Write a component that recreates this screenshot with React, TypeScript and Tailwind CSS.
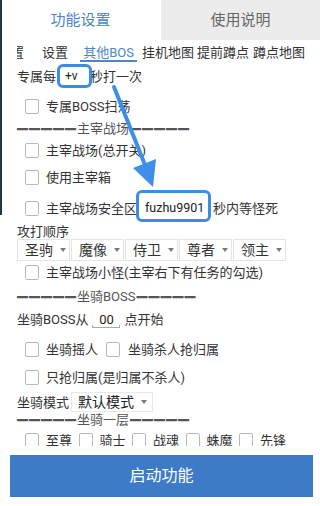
import React from "react"

const Box = () => (
  <span className="inline-block w-[14px] h-[15px] border border-[#b8b8b8] rounded-[2px] bg-white shrink-0" />
)

const Check = ({ label, gap = "ml-[7px]" }: { label: string; gap?: string }) => (
  <div className="flex items-center">
    <Box />
    <span className={gap}>{label}</span>
  </div>
)

const Tri = () => (
  <span className="inline-block w-0 h-0 border-l-[3px] border-r-[3px] border-t-[4px] border-l-transparent border-r-transparent border-t-[#7a7a7a]" />
)

// thick grey dash run, like the original divider text
const Dashes = () => (
  <span className="font-['Liberation_Sans',sans-serif] text-[11px] font-bold text-[#555] tracking-[1px] [text-shadow:0_1px_0_#555]">
    —————
  </span>
)

const Divider = ({ label, h }: { label: string; h: string }) => (
  <div className={`flex items-center pl-[17px] text-[#555] ${h}`}>
    <Dashes />
    <span className="mr-[1px]">{label}</span>
    <Dashes />
  </div>
)

const Drop = ({ label }: { label: string }) => (
  <div className="flex items-center justify-between w-[53px] h-[22px] border border-[#e4e4e4] pl-[7px] pr-[3px] text-[14px] text-[#333]">
    <span>{label}</span>
    <Tri />
  </div>
)

const ORDER = ["圣驹", "魔像", "侍卫", "尊者", "领主"]
const FLOOR = ["至尊", "骑士", "战魂", "蛛魔", "先锋"]

export default function App() {
  return (
    <div className="relative w-[320px] h-[506px] overflow-hidden bg-white text-[13px] text-[#333] font-[Roboto,'Noto_Sans_CJK_SC',sans-serif] leading-none">
      {/* header tabs */}
      <div className="flex h-[40px]">
        <div className="w-[161px] flex items-center justify-center bg-white text-[15px] text-[#4d86c8]">
          功能设置
        </div>
        <div className="flex-1 flex items-center justify-center bg-[#ececec] text-[15px] text-[#666]">
          使用说明
        </div>
      </div>

      {/* scroll area */}
      <div className="h-[406px] overflow-hidden">
        {/* sub tabs */}
        <div className="flex items-center h-[24px] pl-[17px] text-[13px] text-[#333]">
          <div className="w-[7px] overflow-hidden">
            <span className="block -ml-[6px]">置</span>
          </div>
          <span className="ml-[18px]">设置</span>
          <div className="relative ml-[12px] w-[57px] h-[24px] flex items-center justify-center text-[#4d86c8]">
            其他BOS
            <span className="absolute left-0 right-0 bottom-[2px] h-[2px] bg-[#4d86c8]" />
          </div>
          <span className="ml-[5px]">挂机地图</span>
          <span className="ml-[3px]">提前蹲点</span>
          <span className="ml-[4px]">蹲点地图</span>
        </div>

        {/* 专属每 */}
        <div className="flex items-center h-[24px] pl-[17px]">
          <span>专属每</span>
          <div className="relative w-[34px] h-[24px] flex items-center pl-[9px] text-[12px] text-[#222]">
            +v
            <span className="absolute left-[1px] top-0 w-[35px] h-[24px] border-[3px] border-[#3b8de6] rounded-[6px]" />
          </div>
          <span>秒打一次</span>
        </div>

        <div className="flex items-center h-[24px] mt-[6px] pl-[25px]">
          <Check label="专属BOSS扫荡" />
        </div>

        <Divider label="主宰战场" h="h-[20px]" />

        <div className="flex items-center h-[24px] pl-[25px]">
          <Check label="主宰战场(总开关)" />
        </div>
        <div className="flex items-center h-[30px] pl-[25px]">
          <Check label="使用主宰箱" />
        </div>

        <div className="flex items-center h-[32px] pl-[25px]">
          <Check label="主宰战场安全区" />
          <div className="relative w-[76px] h-[32px] flex items-center pl-[8px] text-[12.5px] text-[#222]">
            fuzhu9901
            <span className="absolute -left-[1px] -top-[2px] w-[75px] h-[32px] border-[3px] border-[#3b8de6] rounded-[6px]" />
          </div>
          <span>秒内等怪死</span>
        </div>

        <div className="flex items-center h-[15px] pl-[17px]">攻打顺序</div>
        <div className="flex items-center h-[22px] pl-[17px] gap-[1px]">
          {ORDER.map((o) => (
            <Drop key={o} label={o} />
          ))}
        </div>

        <div className="flex items-center h-[23px] pl-[25px]">
          <Check label="主宰战场小怪(主宰右下有任务的勾选)" />
        </div>

        <Divider label="坐骑BOSS" h="h-[24px]" />

        <div className="flex items-center h-[22px] pl-[17px]">
          <span>坐骑BOSS从</span>
          <div className="relative ml-[4px] w-[28px] h-[22px] flex items-center justify-center text-[#222]">
            00
            <span className="absolute left-0 right-0 bottom-[2px] h-[1px] bg-[#a8a8a8]" />
            <span className="absolute left-0 bottom-[2px] w-[1px] h-[3px] bg-[#a8a8a8]" />
            <span className="absolute right-0 bottom-[2px] w-[1px] h-[3px] bg-[#a8a8a8]" />
          </div>
          <span className="ml-[4px]">点开始</span>
        </div>

        <div className="flex items-center h-[30px] mt-[4px] pl-[25px]">
          <Check label="坐骑摇人" />
          <div className="ml-[8px]">
            <Check label="坐骑杀人抢归属" gap="ml-[8px]" />
          </div>
        </div>

        <div className="flex items-center h-[26px] pl-[25px]">
          <Check label="只抢归属(是归属不杀人)" />
        </div>

        <div className="flex items-center h-[24px] pl-[17px]">
          <span>坐骑模式</span>
          <div className="ml-[2px] w-[82px] h-[20px] flex items-center justify-between border border-[#e8e8e8] pl-[6px] pr-[5px] text-[14px] text-[#222]">
            <span>默认模式</span>
            <Tri />
          </div>
        </div>

        <Divider label="坐骑一层" h="h-[10px]" />

        <div className="flex items-center h-[32px] pl-[25px] gap-[5.5px]">
          {FLOOR.map((f) => (
            <div key={f} className="w-[48px]">
              <Check label={f} />
            </div>
          ))}
        </div>
      </div>

      {/* footer */}
      <div className="h-[60px] pt-[9px] pl-[10px] pr-[7px] bg-white">
        <button className="w-full h-[42px] bg-[#3e7bc6] text-white text-[16px]">启动功能</button>
      </div>

      {/* annotation arrow */}
      <svg className="absolute inset-0 pointer-events-none" width="320" height="506" viewBox="0 0 320 506">
        <line x1="114" y1="87" x2="147" y2="170" stroke="#3d8fe8" strokeWidth="4" strokeLinecap="round" />
        <polygon points="133,168 156,159 153,187" fill="#3d8fe8" />
      </svg>

      {/* window edge */}
      <div className="absolute left-0 top-0 w-[2px] h-[215px] bg-[#1f3644]" />
    </div>
  )
}
